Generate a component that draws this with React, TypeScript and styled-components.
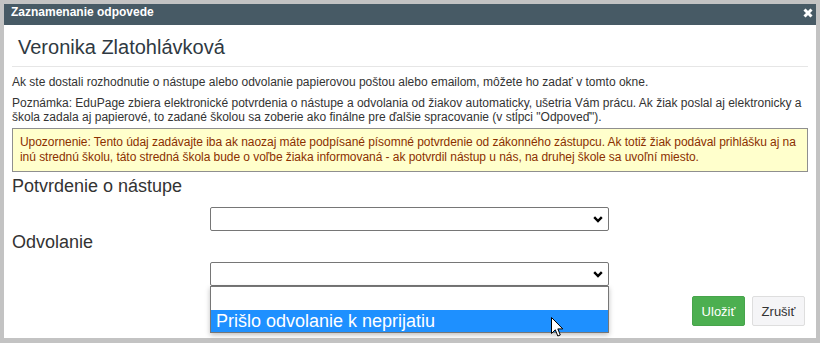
import React from 'react';
import styled, { createGlobalStyle } from 'styled-components';

const GlobalStyle = createGlobalStyle`
  html, body {
    margin: 0;
    padding: 0;
    background: #c3c3c3;
  }
  body {
    font-family: "Liberation Sans", Arial, sans-serif;
    color: #333;
  }
`;

const Frame = styled.div`
  padding: 4px 4px 5px;
`;

const Dialog = styled.div`
  background: #fff;
  display: flex;
  flex-direction: column;
`;

const TitleBar = styled.div`
  height: 21px;
  background: #475a65;
  color: #fff;
  display: flex;
  justify-content: space-between;
  align-items: flex-start;
  padding: 0 3px 0 7px;
  font-size: 12px;
  font-weight: bold;
  line-height: 16px;
`;

const CloseIcon = styled.svg`
  width: 10px;
  height: 10px;
  margin-top: 4px;
`;

const Body = styled.div`
  padding: 0 8px 12px;
`;

const Heading = styled.h2`
  margin: 0;
  padding: 10px 6px 7px;
  font-size: 20px;
  line-height: 24px;
  font-weight: normal;
  color: #2f3942;
  border-bottom: 1px solid #e6e6e6;
`;

const Text = styled.p<{ $gap: number }>`
  margin: ${(p) => p.$gap}px 0 0;
  font-size: 12px;
  line-height: 14px;
  color: #333;
`;

const Warning = styled.div`
  margin-top: 4px;
  padding: 6px 4px 6px 7px;
  border: 1px solid #8f8f8f;
  background: #ffffcc;
  color: #8b3000;
  font-size: 12px;
  line-height: 15px;
  letter-spacing: -0.05px;
`;

const FieldLabel = styled.div<{ $gap: number }>`
  margin-top: ${(p) => p.$gap}px;
  font-size: 18px;
  line-height: 22px;
  color: #333;
`;

const SelectRow = styled.div<{ $gap: number }>`
  margin-top: ${(p) => p.$gap}px;
  padding-left: 198px;
`;

const SelectWrap = styled.div`
  position: relative;
  width: 399px;
`;

const Select = styled.select`
  appearance: none;
  display: block;
  width: 100%;
  height: 24px;
  box-sizing: border-box;
  border: 1px solid #767676;
  border-radius: 2px;
  background: #fff;
  font-family: inherit;
  font-size: 13px;
  color: #000;
  padding: 0 24px 0 4px;
  margin: 0;
`;

const Chevron = styled.svg`
  position: absolute;
  right: 6px;
  top: 9px;
  width: 10px;
  height: 7px;
  pointer-events: none;
`;

const Listbox = styled.div`
  position: absolute;
  top: 100%;
  left: 0;
  width: 100%;
  box-sizing: border-box;
  background: #fff;
  border: 1px solid #767676;
  box-shadow: 0 2px 5px rgba(0, 0, 0, 0.25);
  z-index: 2;
`;

const ListOption = styled.div<{ $active?: boolean; $h: number }>`
  height: ${(p) => p.$h}px;
  line-height: ${(p) => p.$h}px;
  padding-left: 5px;
  font-size: 18px;
  color: ${(p) => (p.$active ? '#fff' : '#000')};
  background: ${(p) => (p.$active ? '#1e90ff' : '#fff')};
  white-space: nowrap;
`;

const Cursor = styled.svg`
  position: absolute;
  left: 340px;
  top: 30px;
  width: 13px;
  height: 21px;
`;

const Footer = styled.div`
  margin-top: 10px;
  display: flex;
  justify-content: flex-end;
  gap: 7px;
  padding-right: 3px;
`;

const Button = styled.button<{ $primary?: boolean }>`
  height: 30px;
  width: 53px;
  padding: 0;
  font-family: inherit;
  font-size: 13px;
  border-radius: 2px;
  border: 1px solid ${(p) => (p.$primary ? '#47a44b' : '#dedede')};
  background: ${(p) => (p.$primary ? '#4caf50' : '#f5f5f7')};
  color: ${(p) => (p.$primary ? '#fff' : '#333')};
`;

const ChevronIcon = () => (
  <Chevron viewBox="0 0 10 7">
    <path d="M1.2 1.2 L5 5 L8.8 1.2" fill="none" stroke="#000" strokeWidth="2.4" />
  </Chevron>
);

const App: React.FC = (): JSX.Element => {
  return (
    <>
      <GlobalStyle />
      <Frame>
        <Dialog>
          <TitleBar>
            <span>Zaznamenanie odpovede</span>
            <CloseIcon viewBox="0 0 10 10">
              <path d="M1.5 1.5 L8.5 8.5 M8.5 1.5 L1.5 8.5" stroke="#fff" strokeWidth="3" />
            </CloseIcon>
          </TitleBar>
          <Body>
            <Heading>Veronika Zlatohlávková</Heading>
            <Text $gap={8}>
              Ak ste dostali rozhodnutie o nástupe alebo odvolanie papierovou poštou alebo emailom, môžete ho zadať v tomto okne.
            </Text>
            <Text $gap={7}>
              Poznámka: EduPage zbiera elektronické potvrdenia o nástupe a odvolania od žiakov automaticky, ušetria Vám prácu. Ak žiak poslal aj elektronicky a
              škola zadala aj papierové, to zadané školou sa zoberie ako finálne pre ďalšie spracovanie (v stĺpci "Odpoveď").
            </Text>
            <Warning>
              Upozornenie: Tento údaj zadávajte iba ak naozaj máte podpísané písomné potvrdenie od zákonného zástupcu. Ak totiž žiak podával prihlášku aj na
              inú strednú školu, táto stredná škola bude o voľbe žiaka informovaná - ak potvrdil nástup u nás, na druhej škole sa uvoľní miesto.
            </Warning>
            <FieldLabel $gap={3}>Potvrdenie o nástupe</FieldLabel>
            <SelectRow $gap={10}>
              <SelectWrap>
                <Select defaultValue="">
                  <option value=""></option>
                </Select>
                <ChevronIcon />
              </SelectWrap>
            </SelectRow>
            <FieldLabel $gap={0}>Odvolanie</FieldLabel>
            <SelectRow $gap={9}>
              <SelectWrap>
                <Select defaultValue="">
                  <option value=""></option>
                  <option value="odvolanie">Prišlo odvolanie k neprijatiu</option>
                </Select>
                <ChevronIcon />
                <Listbox>
                  <ListOption $h={23}>&nbsp;</ListOption>
                  <ListOption $h={22} $active>
                    Prišlo odvolanie k neprijatiu
                  </ListOption>
                  <Cursor viewBox="0 0 13 21">
                    <path
                      d="M0.5 0.5 L0.5 16.5 L4.3 12.8 L6.8 19 L9.3 18 L6.8 11.9 L11.8 11.9 Z"
                      fill="#fff"
                      stroke="#000"
                      strokeWidth="1"
                      strokeLinejoin="miter"
                    />
                  </Cursor>
                </Listbox>
              </SelectWrap>
            </SelectRow>
            <Footer>
              <Button $primary>Uložiť</Button>
              <Button>Zrušiť</Button>
            </Footer>
          </Body>
        </Dialog>
      </Frame>
    </>
  );
};

export default App;
